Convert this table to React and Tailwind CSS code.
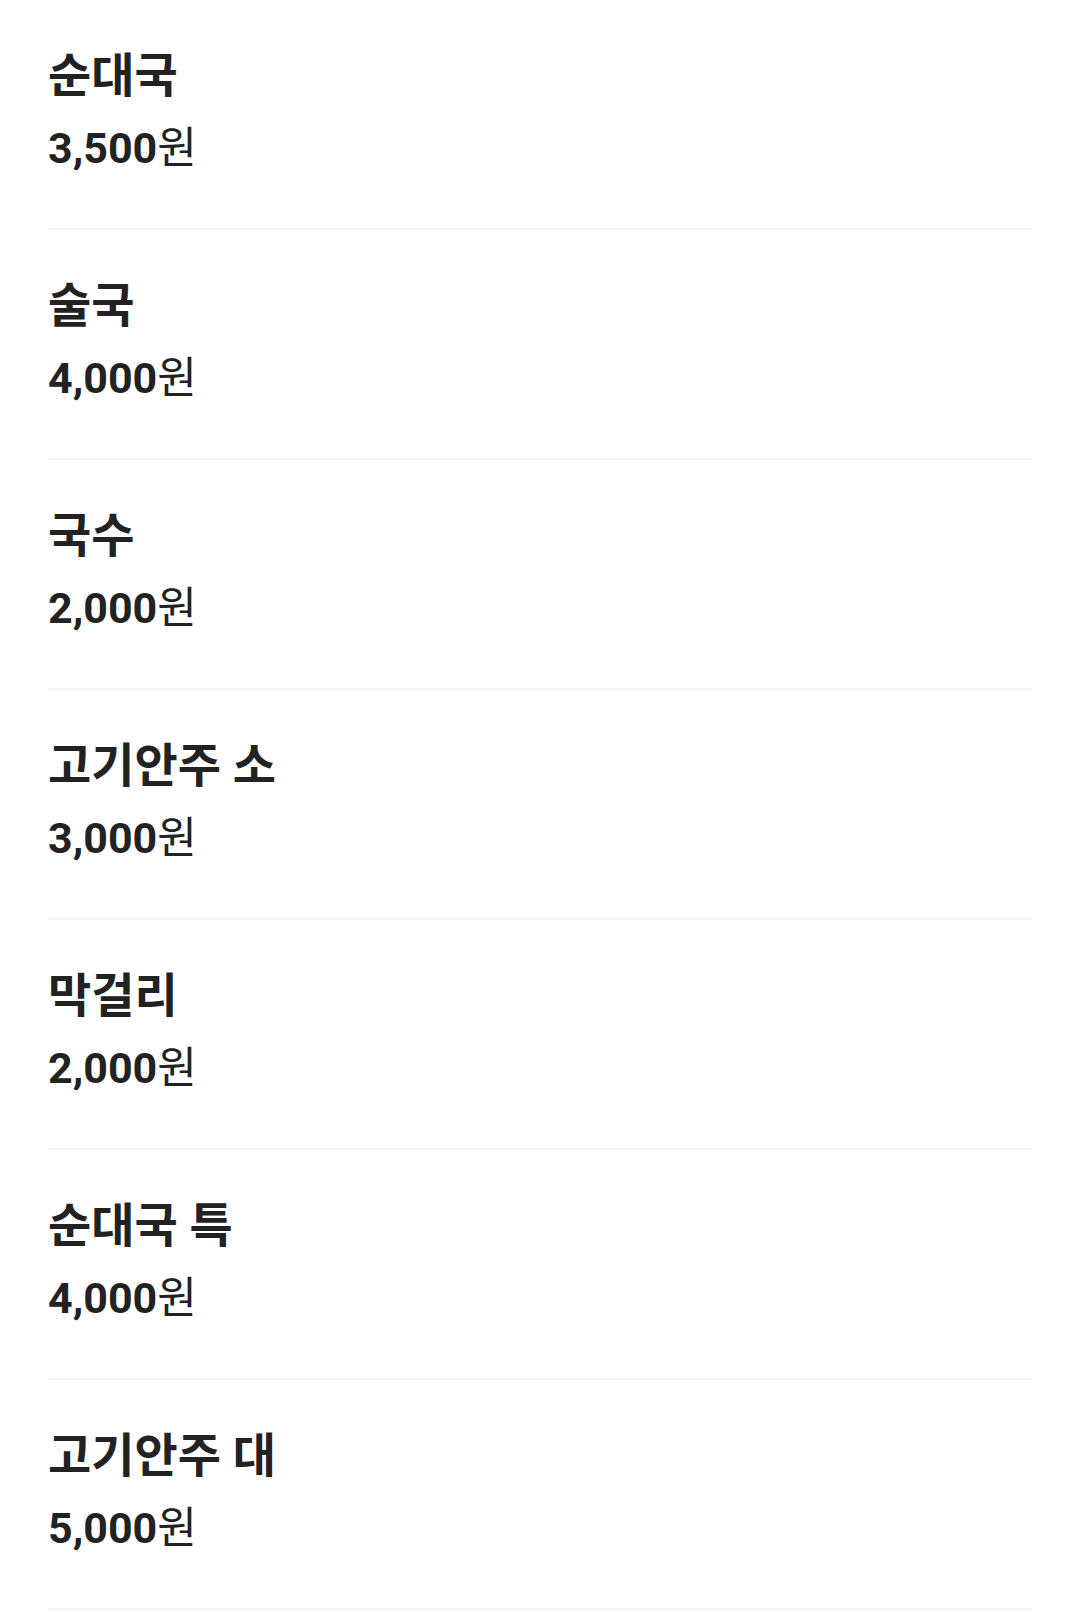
import React from "react";

const menu = [
  { name: "순대국", price: "3,500" },
  { name: "술국", price: "4,000" },
  { name: "국수", price: "2,000" },
  { name: "고기안주 소", price: "3,000" },
  { name: "막걸리", price: "2,000" },
  { name: "순대국 특", price: "4,000" },
  { name: "고기안주 대", price: "5,000" },
];

export default function App() {
  return (
    <div
      className="bg-white px-12 text-[#222222]"
      style={{ fontFamily: 'Roboto, "Noto Sans CJK KR", sans-serif' }}
    >
      {menu.map((item, i) => (
        <div key={i} className="h-[230px] border-b-2 border-[#f4f4f4] flex flex-col pt-[44px]">
          <div className="text-[47px] leading-[64px] font-bold">{item.name}</div>
          <div className="text-[43px] leading-[52px] mt-[14px]">
            <span className="font-bold">{item.price}</span>
            <span className="font-normal">원</span>
          </div>
        </div>
      ))}
    </div>
  );
}
